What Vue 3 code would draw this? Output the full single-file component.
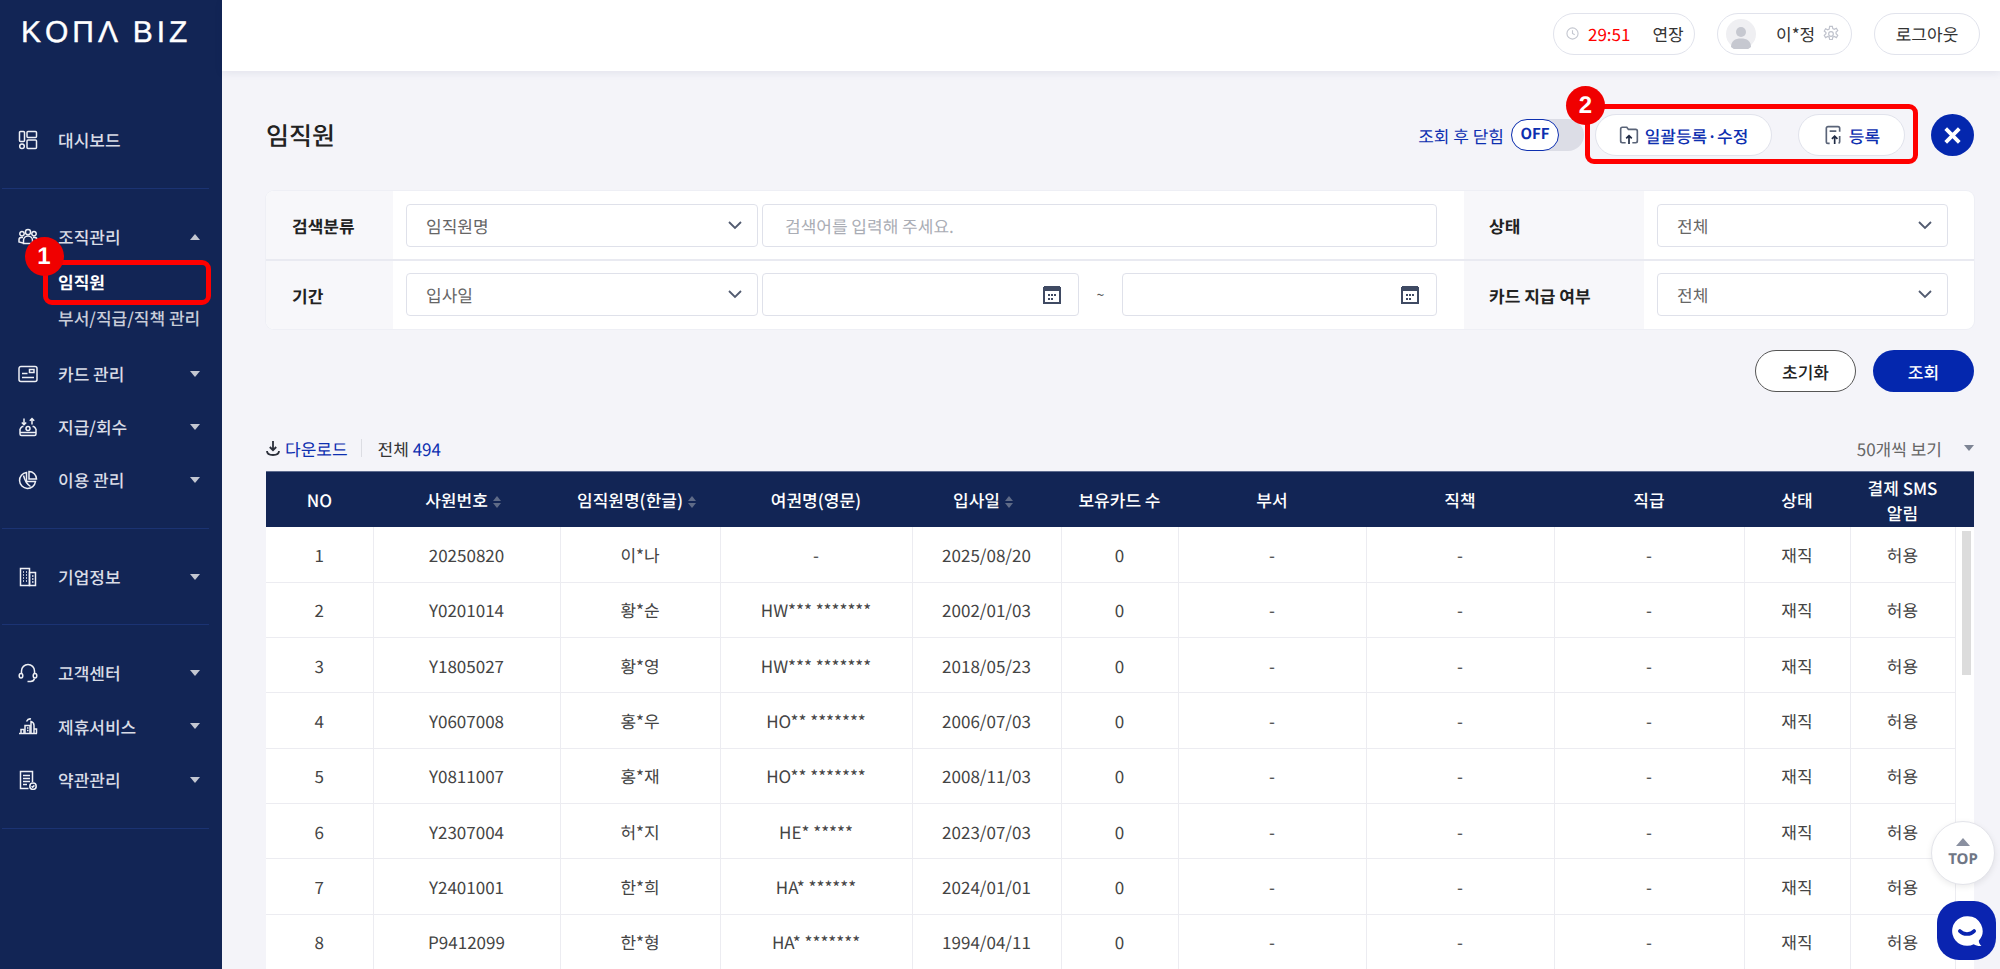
<script setup>
const navGroups = [
  { cls: 'raised', items: [{ label: '대시보드', icon: 'dash', noCaret: true }] },
  {
    cls: 'first-wide raised',
    items: [
      { label: '조직관리', icon: 'org', open: true, subs: [{ label: '임직원', active: true }, { label: '부서/직급/직책 관리' }] },
      { label: '카드 관리', icon: 'card' },
      { label: '지급/회수', icon: 'pay' },
      { label: '이용 관리', icon: 'pie' }
    ]
  },
  { items: [{ label: '기업정보', icon: 'bld' }] },
  {
    cls: 'loose',
    items: [
      { label: '고객센터', icon: 'head' },
      { label: '제휴서비스', icon: 'city' },
      { label: '약관관리', icon: 'doc' }
    ]
  }
]

const icons = {
  dash: ['M2.5 1.5h3a1 1 0 0 1 1 1v8a1 1 0 0 1-1 1h-3a1 1 0 0 1-1-1v-8a1 1 0 0 1 1-1z', 'M4 14a2.3 2.3 0 1 0 0 4.6a2.3 2.3 0 1 0 0-4.6z', 'M10 1.5h7.5a1 1 0 0 1 1 1v4a1 1 0 0 1-1 1H10a1 1 0 0 1-1-1v-4a1 1 0 0 1 1-1z', 'M10 10h7.5a1 1 0 0 1 1 1v6.5a1 1 0 0 1-1 1H10a1 1 0 0 1-1-1V11a1 1 0 0 1 1-1z'],
  org: ['M10 2.5a2.6 2.6 0 1 0 0 5.2a2.6 2.6 0 1 0 0-5.2z', 'M4 4.5a2.2 2.2 0 1 0 0 4.4a2.2 2.2 0 1 0 0-4.4z', 'M16 4.5a2.2 2.2 0 1 0 0 4.4a2.2 2.2 0 1 0 0-4.4z', 'M5.5 16.5v-3a4.5 4.5 0 0 1 9 0v3z', 'M5 10.5H3a2.2 2.2 0 0 0-2 2.2V15l4 1', 'M15 10.5h2a2.2 2.2 0 0 1 2 2.2V15l-4 1'],
  card: ['M3 2.5h14a2 2 0 0 1 2 2v11a2 2 0 0 1-2 2H3a2 2 0 0 1-2-2v-11a2 2 0 0 1 2-2z', 'M11.5 5.5h4.5v3h-4.5z', 'M4 9.5h5.5', 'M4 13.5h12'],
  pay: ['M2 12v5a1.5 1.5 0 0 0 1.5 1.5h13A1.5 1.5 0 0 0 18 17v-5', 'M2 15.5h16', 'M10 9.5a2 2 0 1 0 0 4a2 2 0 1 0 0-4z', 'M6 1.5v6M3.8 5.5 6 7.7 8.2 5.5', 'M14 7.5v-6M11.8 3.7 14 1.5l2.2 2.2', 'M4 9.5h1.5M14.5 9.5H16', 'M2 12l2-2.5M18 12l-2-2.5'],
  pie: ['M8.5 2.5a8 8 0 1 0 9 9h-9z', 'M11 1.5a7.5 7.5 0 0 1 7.5 7.5H11z', 'M5.5 5.5c1 4 2.5 8 7 11'],
  bld: ['M2.5 1.5h9v17h-9z', 'M11.5 5.5h6v13h-6z', 'M5 5h1M8 5h1M5 8h1M8 8h1M5 11h1M8 11h1M5 14h1M8 14h1', 'M14 9h1.5M14 12h1.5M14 15h1.5'],
  head: ['M3.5 11V8a6.5 6.5 0 0 1 13 0v3', 'M3 10.5a1.8 2.2 0 1 0 0 4.4a1.8 2.2 0 1 0 0-4.4z', 'M17 10.5a1.8 2.2 0 1 0 0 4.4a1.8 2.2 0 1 0 0-4.4z', 'M16.5 15.5c-.5 2-2 3-4 3H9.5'],
  city: ['M1 17.5h18', 'M3 17.5v-4h3v4', 'M7 17.5V9.5h5v8', 'M13 17.5V5.5c2 .5 3 2 3 4v8', 'M9 12h1.5M9 14.5h1.5', 'M16 13h2.5v4.5', 'M8.5 5.5c1-2 2.5-3 4.5-2.5'],
  doc: ['M14.5 12V1.5h-12v17h8', 'M5 5.5h7M5 8.5h7M5 11.5h7M5 14.5h4', 'M15 13a3.2 3.2 0 1 0 0 6.4a3.2 3.2 0 1 0 0-6.4z', 'M13.6 16.2l1 1 1.8-1.8']
}

const columns = [
  { label: 'NO', w: 107 },
  { label: '사원번호', w: 187, sort: true },
  { label: '임직원명(한글)', w: 160, sort: true },
  { label: '여권명(영문)', w: 192 },
  { label: '입사일', w: 149, sort: true },
  { label: '보유카드 수', w: 117 },
  { label: '부서', w: 188 },
  { label: '직책', w: 188 },
  { label: '직급', w: 190 },
  { label: '상태', w: 106 },
  { label: '결제 SMS 알림', w: 105, wrap: true }
]

const rows = [
  ['1', '20250820', '이*나', '-', '2025/08/20'],
  ['2', 'Y0201014', '황*순', 'HW*** *******', '2002/01/03'],
  ['3', 'Y1805027', '황*영', 'HW*** *******', '2018/05/23'],
  ['4', 'Y0607008', '홍*우', 'HO** *******', '2006/07/03'],
  ['5', 'Y0811007', '홍*재', 'HO** *******', '2008/11/03'],
  ['6', 'Y2307004', '허*지', 'HE* *****', '2023/07/03'],
  ['7', 'Y2401001', '한*희', 'HA* ******', '2024/01/01'],
  ['8', 'P9412099', '한*형', 'HA* *******', '1994/04/11']
].map((r) => [...r, '0', '-', '-', '-', '재직', '허용'])
</script>

<template>
  <div class="app">
    <aside class="side">
      <div class="logo">KOΠΛ BIZ</div>
      <div v-for="(g, gi) in navGroups" :key="gi" class="group" :class="g.cls">
        <template v-for="it in g.items" :key="it.label">
          <div class="item">
            <svg class="nav-ic" viewBox="0 0 20 20" width="20" height="20">
              <path v-for="d in icons[it.icon]" :key="d" :d="d" />
            </svg>
            <span class="item-label">{{ it.label }}</span>
            <i v-if="!it.noCaret" class="caret" :class="{ up: it.open }"></i>
          </div>
          <div v-if="it.subs" class="subs">
            <div v-for="s in it.subs" :key="s.label" class="sub" :class="{ active: s.active }">
              {{ s.label }}
              <template v-if="s.active">
                <span class="mark mark-side"></span>
                <span class="badge badge-side">1</span>
              </template>
            </div>
          </div>
        </template>
      </div>
    </aside>

    <main class="main">
      <header class="top">
        <div class="pill timer">
          <svg viewBox="0 0 14 14" width="13" height="13" class="clock"><circle cx="7" cy="7" r="6" /><path d="M7 3.5V7l2.4 1.4" /></svg>
          <span class="time">29:51</span>
          <span class="extend">연장</span>
        </div>
        <div class="pill user">
          <svg viewBox="0 0 30 30" width="30" height="30" class="avatar">
            <circle cx="15" cy="15" r="15" fill="#efeff2" />
            <circle cx="15" cy="13" r="5" fill="#c6c8d0" />
            <path d="M5 28c0-6 4-8.500 10-8.500s10 2.500 10 8.500a15 15 0 0 1-20 0z" fill="#c6c8d0" />
          </svg>
          <span class="uname">이*정</span>
          <svg viewBox="0 0 20 20" width="18" height="18" class="gear">
            <path d="M8.500 1.500h3l.5 2.500 1.700.8 2.300-1.200 1.500 2.600-1.900 1.700v1.800l1.900 1.700-1.500 2.600-2.300-1.200-1.700.8-.5 2.500h-3l-.5-2.500-1.700-.8-2.300 1.200-1.500-2.600 1.900-1.700V8.400L2.500 6.700 4 4.100l2.300 1.200L8 4.500z" />
            <circle cx="10" cy="10" r="2.600" />
          </svg>
        </div>
        <div class="pill logout">로그아웃</div>
      </header>

      <section class="content">
        <div class="head">
          <h1 class="title">임직원</h1>
          <div class="actions">
            <span class="toggle-label">조회 후 닫힘</span>
            <div class="track"><span class="knob">OFF</span></div>
            <div class="bulk">
              <button class="btn-round">
                <svg viewBox="0 0 18 18" width="20" height="20" class="btn-ic">
                  <path d="M6 16H3a1.500 1.500 0 0 1-1.500-1.500V3.500A1.500 1.500 0 0 1 3 2h4l1.500 2H15a1.500 1.500 0 0 1 1.500 1.500v9A1.500 1.500 0 0 1 15 16h-3" />
                  <path class="dark" d="M9 17V10M6.500 12 9 9.500 11.500 12" />
                </svg>
                일괄등록·수정
              </button>
              <button class="btn-round reg">
                <svg viewBox="0 0 18 18" width="20" height="20" class="btn-ic">
                  <path d="M6 16.500H4.500A1.500 1.500 0 0 1 3 15V3a1.500 1.500 0 0 1 1.500-1.500h9A1.500 1.500 0 0 1 15 3v3" />
                  <path d="M6 5.500h6M15 10v5a1.500 1.500 0 0 1-1 1.400" />
                  <path class="dark" d="M10.500 17v-7M8 12.500l2.500-2.500 2.500 2.500" />
                </svg>
                등록
              </button>
              <span class="mark mark-top"></span>
              <span class="badge badge-top">2</span>
            </div>
            <button class="close-btn" aria-label="닫기">
              <svg viewBox="0 0 14 14" width="19" height="19"><path d="M2 2l10 10M12 2 2 12" /></svg>
            </button>
          </div>
        </div>

        <div class="panel">
          <div class="prow">
            <div class="plabel">검색분류</div>
            <div class="pbody">
              <div class="field sel first"><span>임직원명</span><svg class="chev" viewBox="0 0 14 9" width="14" height="9"><path d="M1 1l6 6 6-6" /></svg></div>
              <div class="field grow"><span class="ph">검색어를 입력해 주세요.</span></div>
            </div>
            <div class="plabel wide">상태</div>
            <div class="pend">
              <div class="field sel grow"><span>전체</span><svg class="chev" viewBox="0 0 14 9" width="14" height="9"><path d="M1 1l6 6 6-6" /></svg></div>
            </div>
          </div>
          <div class="prow">
            <div class="plabel">기간</div>
            <div class="pbody">
              <div class="field sel first"><span>입사일</span><svg class="chev" viewBox="0 0 14 9" width="14" height="9"><path d="M1 1l6 6 6-6" /></svg></div>
              <div class="field date d1">
                <svg class="cal" viewBox="0 0 18 20" width="18" height="20"><path d="M1 4h16v15H1z" fill="#fff" stroke="#3f4a63" stroke-width="2" /><path d="M1 2h16v5H1z" fill="#3f4a63" /><path d="M5 10h2v2H5zM8 10h2v2H8zM11 10h2v2h-2zM5 14h2v2H5zM8 14h2v2H8z" fill="#3f4a63" /></svg>
              </div>
              <span class="tilde">~</span>
              <div class="field date grow">
                <svg class="cal" viewBox="0 0 18 20" width="18" height="20"><path d="M1 4h16v15H1z" fill="#fff" stroke="#3f4a63" stroke-width="2" /><path d="M1 2h16v5H1z" fill="#3f4a63" /><path d="M5 10h2v2H5zM8 10h2v2H8zM11 10h2v2h-2zM5 14h2v2H5zM8 14h2v2H8z" fill="#3f4a63" /></svg>
              </div>
            </div>
            <div class="plabel wide">카드 지급 여부</div>
            <div class="pend">
              <div class="field sel grow"><span>전체</span><svg class="chev" viewBox="0 0 14 9" width="14" height="9"><path d="M1 1l6 6 6-6" /></svg></div>
            </div>
          </div>
        </div>

        <div class="search-btns">
          <button class="btn-reset">초기화</button>
          <button class="btn-search">조회</button>
        </div>

        <div class="toolbar">
          <div class="tool-left">
            <svg class="dl" viewBox="0 0 14 16" width="14" height="16"><path d="M7 1v9M3.800 7 7 10.200 10.200 7" /><path d="M1 11c0 2.500 2 4 6 4s6-1.500 6-4" /></svg>
            <span class="dl-text">다운로드</span>
            <span class="sep"></span>
            <span class="total">전체 <b>494</b></span>
          </div>
          <div class="tool-right">
            <span>50개씩 보기</span>
            <i class="mini-caret"></i>
          </div>
        </div>

        <table class="grid">
          <colgroup>
            <col v-for="c in columns" :key="c.label" :style="{ width: c.w + 'px' }" />
            <col class="col-scroll" />
          </colgroup>
          <thead>
            <tr>
              <th v-for="c in columns" :key="c.label" :class="{ wrap: c.wrap }">
                {{ c.label }}<span v-if="c.sort" class="sort"><i class="s-up"></i><i class="s-down"></i></span>
              </th>
              <th></th>
            </tr>
          </thead>
          <tbody>
            <tr v-for="(r, ri) in rows" :key="ri">
              <td v-for="(v, ci) in r" :key="ci">{{ v }}</td>
              <td v-if="ri === 0" rowspan="8" class="scroll-cell"><div class="thumb"></div></td>
            </tr>
          </tbody>
        </table>
      </section>

      <button class="to-top"><i class="top-tri"></i>TOP</button>
      <button class="chat" aria-label="채팅">
        <svg viewBox="0 0 40 40" width="36" height="36">
          <path d="M20 3.500a16.500 16.500 0 1 0 7.500 31.200c2 1.400 5 2.200 8.500 2-1.800-1.700-2.800-3.600-2.900-5.800A16.500 16.500 0 0 0 20 3.500z" fill="#fff" />
          <path d="M12 20c4 4.500 12 4.500 16 0" fill="none" stroke="#0a24b0" stroke-width="4" stroke-linecap="round" />
        </svg>
      </button>
    </main>
  </div>
</template>

<style>
html, body { margin: 0; background: #f4f4f9; }
</style>

<style scoped>
.app {
  display: flex;
  width: 2000px;
  height: 969px;
  overflow: hidden;
  background: #f4f4f9;
  font-family: "Noto Sans CJK KR", "Noto Sans", sans-serif;
  color: #333;
  font-size: 17px;
  text-rendering: geometricPrecision;
}
button { font-family: inherit; cursor: pointer; padding: 0; text-rendering: inherit; }

/* sidebar */
.side {
  width: 222px;
  flex: none;
  background: #122555;
  box-sizing: border-box;
  padding-top: 93px;
  position: relative;
}
.logo {
  position: absolute;
  left: 21px;
  top: 14px;
  font-family: "Liberation Sans", sans-serif;
  font-size: 30px;
  line-height: 38px;
  letter-spacing: 4px;
  -webkit-text-stroke: .4px #fff;
  color: #fff;
  white-space: nowrap;
}
.group {
  padding: 21px 0;
  width: 207px;
  margin-left: 2px;
  border-bottom: 1px solid #1b3373;
}
.group.first-wide { padding-top: 22px; }
.item {
  height: 53px;
  box-sizing: border-box;
  display: flex;
  align-items: center;
  padding-left: 16px;
  color: #d9dce6;
  font-weight: 500;
}
.raised .item { padding-bottom: 2px; }
.loose .item { height: 53.5px; }
.nav-ic {
  flex: none;
  fill: none;
  stroke: #eef0f5;
  stroke-width: 1.5;
}
.item-label { margin-left: 20px; flex: 1; }
.caret {
  width: 0;
  height: 0;
  margin-right: 9px;
  border-left: 5.5px solid transparent;
  border-right: 5.5px solid transparent;
  border-top: 6px solid #c3c7d2;
}
.caret.up { border-top: 0; border-bottom: 6px solid #c3c7d2; }
.subs { margin-bottom: 12px; }
.sub {
  height: 36px;
  line-height: 36px;
  padding-left: 56px;
  color: #c9cdd9;
  font-weight: 500;
  position: relative;
  white-space: nowrap;
}
.sub.active { color: #fff; font-weight: 700; }

/* annotations */
.mark {
  position: absolute;
  box-sizing: border-box;
  border: 5px solid #ff0000;
  border-radius: 9px;
  pointer-events: none;
}
.badge {
  position: absolute;
  width: 39px;
  height: 39px;
  border-radius: 50%;
  background: #f00000;
  color: #fff;
  font: 700 24px/39px "Liberation Sans", sans-serif;
  text-align: center;
}
.mark-side { left: 41px; top: -4px; width: 168px; height: 45px; }
.badge-side { left: 22.500px; top: -27px; }
.mark-top { left: -10px; top: -10px; right: -13px; bottom: -8px; }
.badge-top { left: -29px; top: -28px; }

/* top bar */
.main { flex: 1; min-width: 0; position: relative; display: flex; flex-direction: column; }
.top {
  height: 71px;
  flex: none;
  box-sizing: border-box;
  background: #fff;
  box-shadow: 0 2px 8px rgba(30, 40, 90, .08);
  display: flex;
  align-items: center;
  justify-content: flex-end;
  padding: 0 20px 4px 0;
  position: relative;
  z-index: 1;
}
.pill {
  height: 42px;
  box-sizing: border-box;
  border: 1px solid #e1e3ec;
  border-radius: 21px;
  background: #fff;
  display: flex;
  align-items: center;
  font-size: 17px;
  color: #333;
}
.timer { width: 142px; padding-left: 12px; }
.clock { fill: none; stroke: #c4c7d0; stroke-width: 1.2; }
.time { color: #ff0000; margin-left: 9px; font-size: 17px; }
.extend { margin-left: 22px; }
.user { width: 135px; margin-left: 22px; padding-left: 8px; }
.uname { margin-left: 20px; }
.gear { margin-left: 7px; fill: none; stroke: #bfc2cc; stroke-width: 1.300; }
.logout { width: 106px; margin-left: 22px; justify-content: center; }

/* content */
.content { flex: 1; min-height: 0; box-sizing: border-box; padding: 43px 26px 0 44px; }
.head { display: flex; justify-content: space-between; align-items: center; height: 42px; }
.title { margin: 0; font-size: 25px; font-weight: 500; color: #222; }
.actions { display: flex; align-items: center; }
.toggle-label { color: #0d2fb0; font-size: 17px; font-weight: 400; }
.track {
  width: 73px;
  height: 32px;
  margin-left: 7px;
  background: #dcdde6;
  border-radius: 16px;
}
.knob {
  display: block;
  width: 48px;
  height: 32px;
  box-sizing: border-box;
  border: 1.500px solid #0d2fb0;
  border-radius: 16px;
  background: #fff;
  color: #0d2fb0;
  text-align: center;
  font-weight: 700;
  font-size: 15px;
  line-height: 28px;
}
.bulk { display: flex; gap: 26px; margin-left: 11px; position: relative; }
.btn-round {
  width: 177px;
  height: 42px;
  background: #fff;
  border: 1px solid #e1e3ec;
  border-radius: 21px;
  color: #0d2fb0;
  font-size: 17px;
  font-weight: 500;
  display: flex;
  align-items: center;
  justify-content: center;
  gap: 6px;
}
.btn-round.reg { width: 107px; }
.btn-ic { fill: none; stroke: #5a6478; stroke-width: 1.500; }
.btn-ic .dark { stroke: #1f2a44; }
.close-btn {
  width: 43px;
  height: 42px;
  margin-left: 26px;
  border: 0;
  border-radius: 50%;
  background: #0427ae;
  display: flex;
  align-items: center;
  justify-content: center;
}
.close-btn svg { fill: none; stroke: #fff; stroke-width: 2.800; }

/* search panel */
.panel { margin-top: 35px; background: #fff; border-radius: 8px; overflow: hidden; box-shadow: 0 0 0 1px #eeeff5; }
.prow { display: grid; grid-template-columns: 127px 1071px 180px 330px; height: 68px; }
.prow + .prow { border-top: 2px solid #e9eaf1; }
.prow + .prow .field { margin-bottom: 2px; }
.plabel {
  background: #f7f7fa;
  display: flex;
  align-items: center;
  padding-left: 26px;
  font-weight: 700;
  font-size: 17px;
  color: #222;
}
.plabel.wide { padding-left: 25px; }
.pbody { display: flex; align-items: center; padding: 0 27px 0 13px; }
.pend { display: flex; align-items: center; padding: 0 26px 0 13px; }
.field {
  height: 43px;
  box-sizing: border-box;
  border: 1px solid #dfe1ea;
  border-radius: 4px;
  background: #fff;
  display: flex;
  align-items: center;
  justify-content: space-between;
  padding: 0 15px 0 19px;
  color: #666;
  font-size: 17px;
}
.field.first { width: 352px; flex: none; margin-right: 4px; }
.grow { flex: 1; }
.ph { color: #aaadb5; margin-left: 3px; }
.date { justify-content: flex-end; padding: 0 17px 0 0; }
.d1 { width: 317px; flex: none; }
.tilde { width: 43px; flex: none; text-align: center; font-size: 14px; color: #555; }
.chev { fill: none; stroke: #525b70; stroke-width: 1.800; }

.search-btns { display: flex; justify-content: flex-end; gap: 17px; margin-top: 21px; }
.btn-reset, .btn-search {
  width: 101px;
  height: 42px;
  border-radius: 21px;
  font-size: 17px;
  font-weight: 500;
}
.btn-reset { background: #fff; border: 1px solid #555; color: #222; }
.btn-search { background: #0427ae; border: 0; color: #fff; }

.toolbar {
  margin-top: 44px;
  height: 24px;
  display: flex;
  justify-content: space-between;
  align-items: center;
  font-size: 17px;
}
.tool-left { display: flex; align-items: center; }
.dl { fill: none; stroke: #2b2f3a; stroke-width: 1.800; margin-right: 5px; }
.dl-text { color: #0d2fb0; }
.sep { width: 1px; height: 18px; background: #dcdde3; margin: 0 16px 0 13px; }
.total { color: #333; }
.total b { color: #0d2fb0; font-weight: 400; }
.tool-right { display: flex; align-items: center; color: #666; }
.mini-caret {
  margin-left: 22px;
  width: 0;
  height: 0;
  border-left: 5px solid transparent;
  border-right: 5px solid transparent;
  border-top: 6px solid #7d8494;
}

/* table */
.grid {
  margin-top: 11px;
  width: 1708px;
  table-layout: fixed;
  border-collapse: collapse;
  background: #fff;
}
.grid th {
  height: 55px;
  background: #122555;
  color: #fff;
  font-size: 17px;
  font-weight: 500;
  padding: 0;
  line-height: 25px;
  border-top: 1px solid #5d6b8e;
}
.grid th.wrap { padding: 0 8px; }
.sort { display: inline-flex; flex-direction: column; gap: 2px; margin: 0 7px 0 5px; vertical-align: middle; }
.s-up, .s-down { width: 0; height: 0; border-left: 4px solid transparent; border-right: 4px solid transparent; }
.s-up { border-bottom: 5px solid #5f6b87; }
.s-down { border-top: 5px solid #5f6b87; }
.grid td {
  height: 55.300px;
  padding: 0;
  box-sizing: border-box;
  text-align: center;
  border: 1px solid #ececf1;
  border-top: 0;
  font-size: 17px;
  color: #444;
}
.grid td:first-child { border-left: 0; }
.grid td.scroll-cell { vertical-align: top; border: 0; padding: 4px 4px 0 6px; }
.thumb { height: 144px; width: 9px; background: #dcdcdc; }

/* floating */
.to-top {
  position: absolute;
  left: 1709px;
  top: 821px;
  width: 64px;
  height: 64px;
  box-sizing: border-box;
  border: 1px solid #e3e4ea;
  border-radius: 50%;
  background: #fff;
  box-shadow: 0 2px 6px rgba(0, 0, 0, .08);
  color: #6f7685;
  font: 700 15px/18px "Noto Sans", sans-serif;
  display: flex;
  flex-direction: column;
  align-items: center;
  justify-content: center;
  gap: 4px;
}
.top-tri {
  width: 0;
  height: 0;
  border-left: 7px solid transparent;
  border-right: 7px solid transparent;
  border-bottom: 8px solid #8a90a0;
}
.chat {
  position: absolute;
  left: 1715px;
  top: 901px;
  width: 59px;
  height: 59px;
  border: 0;
  border-radius: 22px;
  background: #0a24b0;
  display: flex;
  align-items: center;
  justify-content: center;
}
</style>
